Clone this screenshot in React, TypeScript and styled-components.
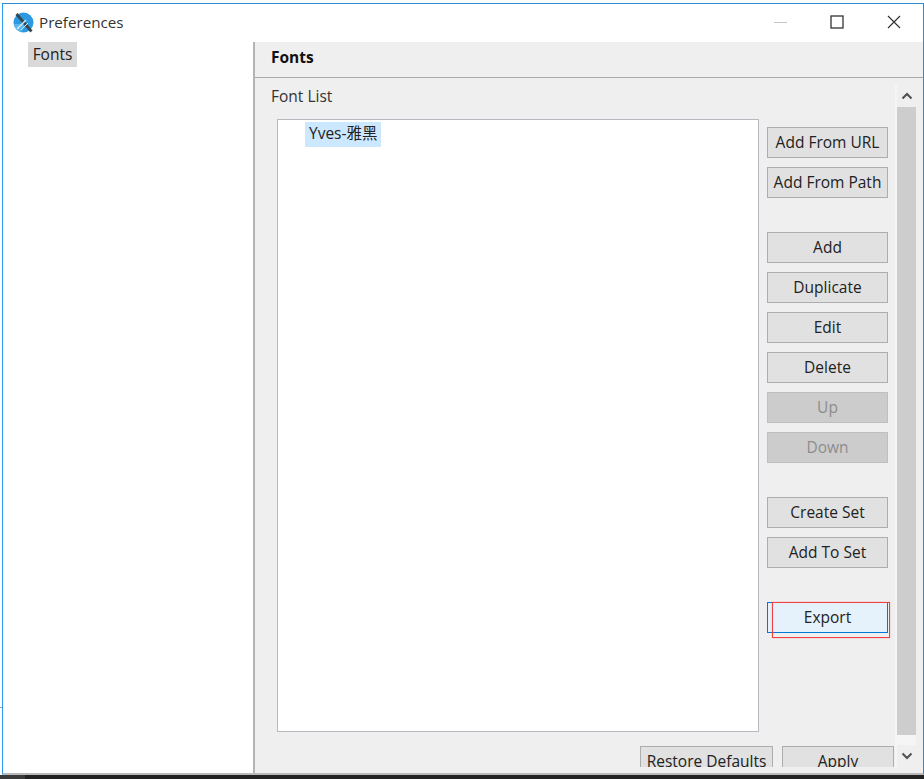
import React from "react";
import styled, { createGlobalStyle } from "styled-components";

const GlobalStyle = createGlobalStyle`
  html, body {
    margin: 0;
    padding: 0;
    background: #fdfdfd;
    overflow: hidden;
  }
  * {
    box-sizing: border-box;
  }
`;

const topButtons = ["Add From URL", "Add From Path"];
const editButtons = [
  { label: "Add" },
  { label: "Duplicate" },
  { label: "Edit" },
  { label: "Delete" },
  { label: "Up", disabled: true },
  { label: "Down", disabled: true },
];
const setButtons = ["Create Set", "Add To Set"];

const AppIcon = () => (
  <svg width="21" height="21" viewBox="0 0 21 21">
    <circle cx="10.5" cy="10.5" r="10" fill="#2b9ae0" />
    <path d="M1 12a10 10 0 0 0 7 8L13 12z" fill="#5cb8ec" />
    <path d="M3.5 2L18.5 19.5" stroke="#37474f" strokeWidth="2.8" />
    <path d="M4 17L13 8" stroke="#d5e9f5" strokeWidth="1.4" />
    <path d="M8 18L15 11" stroke="#d5e9f5" strokeWidth="1" />
  </svg>
);

const App = () => {
  return (
    <Page>
      <GlobalStyle />
      <Frame>
        <TitleBar>
          <AppIcon />
          <Title>Preferences</Title>
          <WindowControls>
            <svg width="14" height="14" viewBox="0 0 14 14">
              <path d="M1 7.5H14" stroke="#c4c4c4" strokeWidth="1" />
            </svg>
            <svg width="14" height="14" viewBox="0 0 14 14">
              <rect x="1" y="1" width="12" height="12" fill="none" stroke="#333" strokeWidth="1.3" />
            </svg>
            <svg width="14" height="14" viewBox="0 0 14 14">
              <path d="M1 1L13 13M13 1L1 13" stroke="#333" strokeWidth="1.2" />
            </svg>
          </WindowControls>
        </TitleBar>

        <Body>
          <Sidebar>
            <NavItem>Fonts</NavItem>
          </Sidebar>

          <Panel>
            <PanelHeader>Fonts</PanelHeader>
            <PanelBody>
              <Main>
                <SectionLabel>Font List</SectionLabel>
                <ListRow>
                  <FontList>
                    <FontItem>Yves-雅黑</FontItem>
                  </FontList>
                  <ButtonColumn>
                    <ButtonGroup>
                      {topButtons.map((label) => (
                        <Button key={label}>{label}</Button>
                      ))}
                    </ButtonGroup>
                    <ButtonGroup>
                      {editButtons.map((b) => (
                        <Button key={b.label} disabled={b.disabled}>
                          {b.label}
                        </Button>
                      ))}
                    </ButtonGroup>
                    <ButtonGroup>
                      {setButtons.map((label) => (
                        <Button key={label}>{label}</Button>
                      ))}
                    </ButtonGroup>
                    <ButtonGroup>
                      <ExportWrap>
                        <Button $focused>Export</Button>
                        <Annotation />
                      </ExportWrap>
                    </ButtonGroup>
                  </ButtonColumn>
                </ListRow>
                <FooterRow>
                  <RestoreButton>Restore Defaults</RestoreButton>
                  <ApplyButton>Apply</ApplyButton>
                </FooterRow>
              </Main>
              <Scrollbar>
                <ArrowSlot>
                  <svg width="12" height="8" viewBox="0 0 12 8">
                    <path d="M1.5 6.5L6 2L10.5 6.5" fill="none" stroke="#505050" strokeWidth="2" />
                  </svg>
                </ArrowSlot>
                <Thumb />
                <ArrowSlot>
                  <svg width="12" height="8" viewBox="0 0 12 8">
                    <path d="M1.5 1.5L6 6L10.5 1.5" fill="none" stroke="#505050" strokeWidth="2" />
                  </svg>
                </ArrowSlot>
              </Scrollbar>
            </PanelBody>
          </Panel>
        </Body>
      </Frame>
      <Taskbar />
    </Page>
  );
};

const Page = styled.div`
  position: relative;
  width: 924px;
  height: 779px;
  display: flex;
  flex-direction: column;
  padding-top: 3px;
  font-family: "Open Sans", "Noto Sans CJK SC", sans-serif;
  font-size: 15.5px;
  color: #222;

  /* edge of the window behind this one */
  &::before {
    content: "";
    position: absolute;
    left: 0;
    top: 707px;
    width: 2px;
    height: 1px;
    background: #9a9a9a;
  }
`;

const Frame = styled.div`
  flex: 1;
  min-height: 0;
  margin-left: 2px;
  display: flex;
  flex-direction: column;
  background: #fff;
  border-top: 1px solid #2c8ad6;
  border-left: 1px solid #2c9af0;
  border-right: 1px solid #2c8ad6;
  border-bottom: 2px solid #b9b9b9;
`;

const TitleBar = styled.div`
  height: 38px;
  display: flex;
  align-items: center;
  padding: 0 0 2px 10px;
  flex-shrink: 0;
`;

const Title = styled.span`
  margin-left: 5px;
  font-size: 15.2px;
  color: #333;
`;

const WindowControls = styled.div`
  margin-left: auto;
  margin-right: 22px;
  display: flex;
  align-items: center;
  gap: 43px;
`;

const Body = styled.div`
  flex: 1;
  min-height: 0;
  display: flex;
`;

const Sidebar = styled.div`
  width: 252px;
  padding-left: 25px;
  flex-shrink: 0;
  border-right: 2px solid #b4b4b4;
`;

const NavItem = styled.div`
  width: 49px;
  height: 25px;
  line-height: 24px;
  text-align: center;
  background: #d9d9d9;
`;

const Panel = styled.div`
  flex: 1;
  min-width: 0;
  display: flex;
  flex-direction: column;
  background: #efefef;
`;

const PanelHeader = styled.div`
  height: 36px;
  flex-shrink: 0;
  padding-left: 16px;
  line-height: 30px;
  font-weight: 700;
  color: #111;
  border-bottom: 1px solid #a9a9a9;
`;

const PanelBody = styled.div`
  flex: 1;
  min-height: 0;
  display: flex;
  padding-top: 7px;
  padding-bottom: 6px;
  padding-right: 7px;
`;

const Main = styled.div`
  flex: 1;
  min-width: 0;
  overflow: hidden;
`;

const SectionLabel = styled.div`
  height: 21px;
  line-height: 23px;
  padding-left: 16px;
  color: #333;
`;

const ListRow = styled.div`
  display: flex;
  margin-top: 13px;
  margin-left: 22px;
  gap: 8px;
`;

const FontList = styled.div`
  width: 482px;
  height: 613px;
  padding: 2px 0 0 27px;
  background: #fff;
  border: 1px solid #b8b8c0;
`;

const FontItem = styled.div`
  width: 76px;
  height: 25px;
  line-height: 23px;
  padding-left: 4px;
  background: #cce8ff;
  white-space: nowrap;
`;

const ButtonColumn = styled.div`
  width: 121px;
  padding-top: 8px;
  display: flex;
  flex-direction: column;
  gap: 34px;
`;

const ButtonGroup = styled.div`
  display: flex;
  flex-direction: column;
  gap: 9px;
`;

const ExportWrap = styled.div`
  position: relative;
`;

// hand-drawn highlight sitting on top of the Export button
const Annotation = styled.div`
  position: absolute;
  left: 5px;
  top: 0;
  width: 118px;
  height: 36px;
  border: 1px solid #f04040;
  box-shadow: 0 0 1px rgba(240, 64, 64, 0.6);
  pointer-events: none;
`;

const Button = styled.button<{ $focused?: boolean }>`
  display: block;
  width: 100%;
  height: 31px;
  padding: 0 0 2px;
  font: inherit;
  color: #222;
  background: ${(p) => (p.$focused ? "#e5f1fb" : "#e1e1e1")};
  border: 1px solid ${(p) => (p.$focused ? "#0078d7" : "#adadad")};

  &:disabled {
    color: #8c8c8c;
    background: #cccccc;
    border-color: #bfbfbf;
  }
`;

const FooterRow = styled.div`
  display: flex;
  justify-content: flex-end;
  gap: 9px;
  margin-top: 14px;
  padding-right: 1px;
`;

const RestoreButton = styled(Button)`
  width: 133px;
`;

const ApplyButton = styled(Button)`
  width: 112px;
`;

const Scrollbar = styled.div`
  width: 21px;
  flex-shrink: 0;
  display: flex;
  flex-direction: column;
  background: #f5f5f5;
  padding-left: 2px;
`;

const ArrowSlot = styled.div`
  height: 22px;
  flex-shrink: 0;
  display: flex;
  align-items: center;
  justify-content: center;
  background: #efefef;
`;

const Thumb = styled.div`
  flex: 1;
  background: #cdcdcd;
  margin-bottom: 10px;
`;

const Taskbar = styled.div`
  height: 4px;
  flex-shrink: 0;
  background: linear-gradient(to right, #3a3a3a 25px, #222 25px);
`;

export default App;
